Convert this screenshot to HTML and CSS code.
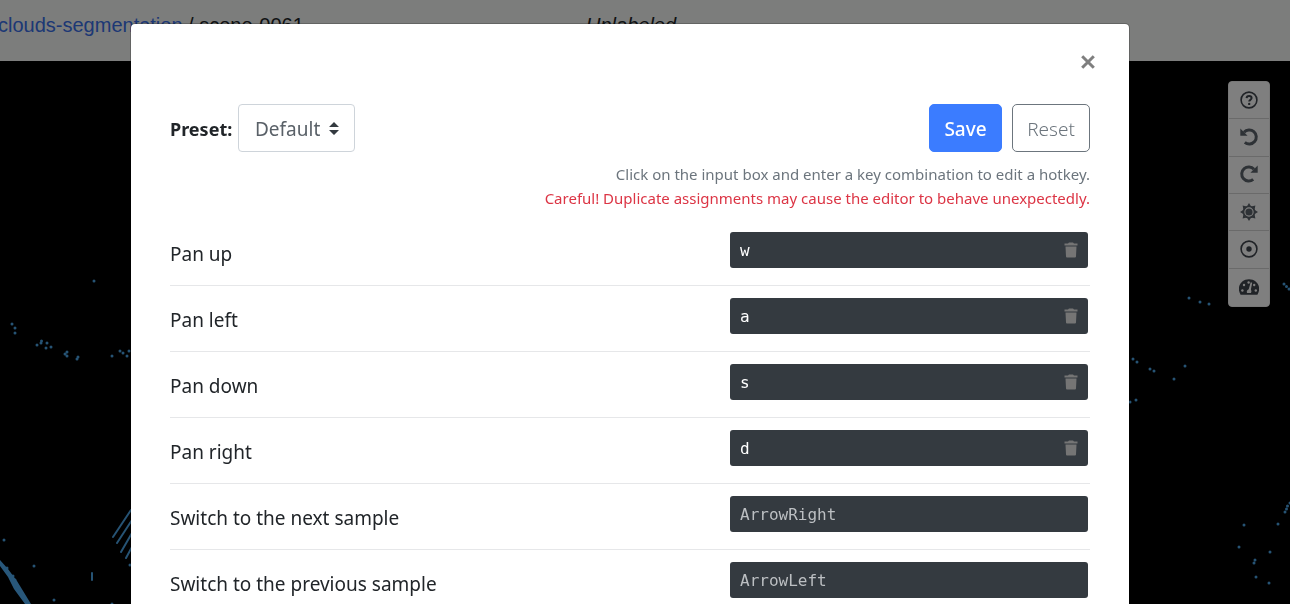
FILE: index.html
```html
<!DOCTYPE html>
<html lang="en">
<head>
<meta charset="utf-8">
<meta name="viewport" content="width=device-width, initial-scale=1">
<title>Hotkeys</title>
<link rel="stylesheet" href="styles.css">
</head>
<body>
<div class="editor">
  <header class="topbar">
    <nav class="breadcrumb"><a href="#">clouds-segmentation</a> / scene-0061</nav>
    <em class="status">Unlabeled</em>
  </header>
  <main class="viewport">
    <svg class="cloud cloud-left" width="132" height="384" viewBox="0 220 132 384" aria-hidden="true">
      <path class="dots" d="M94 281h0M12 324h0M15 328h0M15 333h0M37 345h0M41 343h0M41.500 341h0M46 348h0M47 343h0M51 347h0M65 354h0M67 352h0M67 356h0M77 359h0M78 357h0M112 356h0M120 351h0M123 353h0M127 356h0M129 351h0M4 540h0M34 566h0M54 600h0M112 604h0M7 568h0M13 576h0M15 580h0M130 565h0"/>
      <path class="strokes" d="M131 510L113 537M132 520L117 543M132 533L121 552M132 547L126 558M92 573v7"/>
      <path class="solid" d="M0 560L8 569L17 581L31 604H25L14 589L8 577L0 566Z"/>
    </svg>
    <svg class="cloud cloud-right" width="162" height="384" viewBox="1128 220 162 384" aria-hidden="true">
      <path class="dots" d="M1189 298h0M1200 302h0M1209 304h0M1284 284h0M1286.500 286.500h0M1289 289h0M1133 359h0M1137 362h0M1150 369h0M1154 371h0M1185 366h0M1174 379h0M1136 400h0M1130 402h0M1290 503h0M1287.500 506h0M1286.500 509h0M1285 512h0M1244 525h0M1278 524h0M1239 547h0M1270 552h0M1255 560h0M1254 563h0M1256 577h0M1269 583h0"/>
    </svg>
    <div class="tools">
      <button class="tool dark" type="button" aria-label="Help"><svg viewBox="0 0 20 20"><circle cx="10" cy="10" r="7.900" fill="none" stroke="currentColor" stroke-width="1.600"/><path d="M7.600 8.100C7.700 5.200 12.600 5.200 12.600 8.100C12.600 9.900 10.200 9.800 10.200 11.500" fill="none" stroke="currentColor" stroke-width="2"/><circle cx="10.200" cy="13.900" r="1.200"/></svg></button>
      <button class="tool" type="button" aria-label="Undo"><svg viewBox="0 0 20 20"><path d="M5 5.300A7 7 0 1 1 5.800 15.300" fill="none" stroke="currentColor" stroke-width="3"/><path d="M1.300 1.500v7.300h7.300z"/></svg></button>
      <button class="tool" type="button" aria-label="Redo"><svg viewBox="0 0 20 20"><path d="M15 5.300A7 7 0 1 0 14.200 15.300" fill="none" stroke="currentColor" stroke-width="3"/><path d="M18.700 1.500v7.300h-7.300z"/></svg></button>
      <button class="tool" type="button" aria-label="Brightness"><svg viewBox="0 0 20 20"><circle cx="10" cy="10" r="3.600"/><circle cx="10" cy="10" r="5.500" fill="none" stroke="currentColor" stroke-width="1.700"/><path d="M7.500 5L10 1L12.500 5ZM7.500 15L10 19L12.500 15ZM5 7.500L1 10L5 12.500ZM15 7.500L19 10L15 12.500ZM4.500 8L3.600 3.600L8 4.500ZM12 4.500L16.400 3.600L15.500 8ZM4.500 12L3.600 16.400L8 15.500ZM15.500 12L16.400 16.400L12 15.500Z"/></svg></button>
      <button class="tool dark" type="button" aria-label="Center view"><svg viewBox="0 0 20 20"><circle cx="10" cy="10" r="7.900" fill="none" stroke="currentColor" stroke-width="1.600"/><circle cx="10" cy="10" r="2.700"/></svg></button>
      <button class="tool dark" type="button" aria-label="Performance"><svg viewBox="0 0 20 20"><path d="M1.600 17.800C-3 10 2 2.200 10 2.200S23 10 18.400 17.800Z"/><g class="cutout"><circle cx="3.400" cy="13.500" r="1.200"/><circle cx="5" cy="8" r="1.200"/><circle cx="9.600" cy="5.500" r="1.200"/><circle cx="15.200" cy="8" r="1.200"/><circle cx="16.800" cy="13.500" r="1.200"/><path d="M11.700 5.300L13.200 5.800L11.900 12.600Q13 14.200 12 16H8Q7.100 13.300 9.700 12.200Z"/></g></svg></button>
    </div>
  </main>
</div>

<div class="backdrop">
  <section class="modal" role="dialog" aria-modal="true" aria-label="Hotkeys">
    <div class="modal-head">
      <button class="close" type="button" aria-label="Close"><svg viewBox="0 0 14 14"><path d="M1.200 1.200L12.800 12.800M12.800 1.200L1.200 12.800"/></svg></button>
    </div>
    <div class="controls">
      <label class="preset-label" for="preset">Preset:</label>
      <span class="select-wrap">
        <select id="preset"><option>Default</option></select>
        <svg class="arrows" viewBox="0 0 10 13" aria-hidden="true"><path d="M0 5L5 0L10 5ZM0 8H10L5 13Z"/></svg>
      </span>
      <div class="actions">
        <button class="btn save" type="button">Save</button>
        <button class="btn reset" type="button">Reset</button>
      </div>
    </div>
    <div class="notes">
      <p>Click on the input box and enter a key combination to edit a hotkey.</p>
      <p class="warning">Careful! Duplicate assignments may cause the editor to behave unexpectedly.</p>
    </div>
    <div class="hotkeys">
      <div class="row"><label for="k1">Pan up</label><span class="key"><input id="k1" value="w" readonly><button class="trash" type="button" aria-label="Clear Pan up"><svg viewBox="0 0 14 16"><path d="M.5 1.500H4L5 .5H9L10 1.500H13.500V3.500H.5ZM1.500 4.500H12.500L12 14.500Q12 15.500 11 15.500H3Q2 15.500 2 14.500Z"/></svg></button></span></div>
      <div class="row"><label for="k2">Pan left</label><span class="key"><input id="k2" value="a" readonly><button class="trash" type="button" aria-label="Clear Pan left"><svg viewBox="0 0 14 16"><path d="M.5 1.500H4L5 .5H9L10 1.500H13.500V3.500H.5ZM1.500 4.500H12.500L12 14.500Q12 15.500 11 15.500H3Q2 15.500 2 14.500Z"/></svg></button></span></div>
      <div class="row"><label for="k3">Pan down</label><span class="key"><input id="k3" value="s" readonly><button class="trash" type="button" aria-label="Clear Pan down"><svg viewBox="0 0 14 16"><path d="M.5 1.500H4L5 .5H9L10 1.500H13.500V3.500H.5ZM1.500 4.500H12.500L12 14.500Q12 15.500 11 15.500H3Q2 15.500 2 14.500Z"/></svg></button></span></div>
      <div class="row"><label for="k4">Pan right</label><span class="key"><input id="k4" value="d" readonly><button class="trash" type="button" aria-label="Clear Pan right"><svg viewBox="0 0 14 16"><path d="M.5 1.500H4L5 .5H9L10 1.500H13.500V3.500H.5ZM1.500 4.500H12.500L12 14.500Q12 15.500 11 15.500H3Q2 15.500 2 14.500Z"/></svg></button></span></div>
      <div class="row"><label for="k5">Switch to the next sample</label><span class="key"><input id="k5" value="ArrowRight" disabled></span></div>
      <div class="row"><label for="k6">Switch to the previous sample</label><span class="key"><input id="k6" value="ArrowLeft" disabled></span></div>
    </div>
  </section>
</div>
</body>
</html>
```
FILE: styles.css
```css
* { box-sizing: border-box; }

body {
  margin: 0;
  overflow: hidden;
  color: #212529;
  font-family: "Segoe UI", "Noto Sans", sans-serif;
  font-size: 19px;
  line-height: 30px;
}

button, input, select { font: inherit; margin: 0; }
button { cursor: pointer; }
svg { fill: currentColor; }

.editor {
  display: flex;
  flex-direction: column;
  height: 100vh;
}

.topbar {
  display: grid;
  grid-template-columns: 586px 1fr;
  height: 61px;
  padding-top: 10px;
  background: #f8faf8;
  font-family: "Liberation Sans", Arial, sans-serif;
  font-size: 20px;
}
.breadcrumb { margin-left: -2px; white-space: nowrap; }
.breadcrumb a { color: #3a70ea; text-decoration: none; }

.viewport {
  position: relative;
  display: flex;
  flex: 1;
  justify-content: flex-end;
  align-items: flex-start;
  padding: 20px;
  background: #000;
}
.cloud { position: absolute; bottom: 0; }
.cloud-left { left: 0; }
.cloud-right { right: 0; }
.dots, .strokes {
  fill: none;
  stroke: #4ca6e8;
  stroke-width: 3;
  stroke-linecap: round;
}
.strokes { stroke-width: 2; }
.solid { fill: #50aef4; }

.tools {
  position: relative;
  display: grid;
  grid-auto-rows: 1fr;
  width: 42px;
  height: 226px;
  border: 1px solid #eee;
  border-radius: 4px;
  overflow: hidden;
  background: #fff;
}
.tool {
  display: flex;
  align-items: center;
  justify-content: center;
  padding: 0 0 1px;
  border: 0;
  border-bottom: 1px solid #d4d4d4;
  background: #fff;
  color: #5d646c;
}
.tool:last-child { border-bottom: 0; }
.tool svg { width: 20px; height: 20px; }
.dark { color: #41464e; }
.cutout { fill: #fff; }

.backdrop {
  position: fixed;
  inset: 0;
  padding: 23px 30px 0 0;
  overflow: hidden;
  background: rgba(0, 0, 0, 0.5);
}

.modal {
  max-width: 1000px;
  margin: 0 auto;
  padding: 0 39px;
  border: 1px solid rgba(0, 0, 0, 0.2);
  border-radius: 5px;
  background: #fff;
  background-clip: padding-box;
}
.modal-head {
  display: flex;
  justify-content: flex-end;
  height: 80px;
  padding-top: 26px;
}
.close {
  width: 24px;
  height: 24px;
  margin-right: -10px;
  padding: 5px;
  border: 0;
  background: none;
  color: #7f7f7f;
}
.close svg {
  display: block;
  width: 14px;
  height: 14px;
  stroke: currentColor;
  stroke-width: 3;
}

.controls { display: flex; align-items: center; }
.preset-label { width: 68px; padding-top: 2px; font-size: 18px; font-weight: 700; }
.select-wrap { position: relative; }
select {
  display: block;
  appearance: none;
  width: 117px;
  height: 48px;
  padding: 2px 16px 0;
  border: 1px solid #ced4da;
  border-radius: 4px;
  background: #fff;
  color: #5a6168;
}
.arrows {
  position: absolute;
  top: 18px;
  right: 16px;
  width: 10px;
  height: 13px;
  color: #343a40;
  pointer-events: none;
}
.actions { display: flex; gap: 10px; margin-left: auto; }
.btn {
  height: 48px;
  padding: 2px 0 0;
  border: 1px solid #3b7cff;
  border-radius: 5px;
}
.save { width: 73px; background: #3b7cff; color: #fff; font-weight: 500; }
.reset { width: 78px; border-color: #6c757d; background: #fff; color: #6c757d; font-weight: 300; }

.notes {
  padding: 10px 0;
  color: #6c757d;
  font-size: 15px;
  line-height: 24px;
  text-align: right;
}
.notes p { margin: 0; }
.notes .warning { color: #dc3545; }

.row {
  display: grid;
  grid-template-columns: 1fr 360px;
  padding: 12px 0 17px;
  border-bottom: 1px solid #e6e7e9;
}
.row label { padding-top: 8px; line-height: 28px; }
.key { position: relative; padding-right: 2px; }
.key input {
  display: block;
  width: 100%;
  height: 36px;
  padding: 0 10px;
  border: 0;
  border-radius: 3px;
  background: #343a40;
  color: #fff;
  font-family: Consolas, "DejaVu Sans Mono", monospace;
  font-size: 16px;
}
.key input:disabled { color: #bcbfc2; }
.trash {
  position: absolute;
  top: 10px;
  right: 12px;
  width: 14px;
  height: 16px;
  padding: 0;
  border: 0;
  background: none;
  color: #757575;
}
.trash svg { display: block; width: 14px; height: 16px; }
```
